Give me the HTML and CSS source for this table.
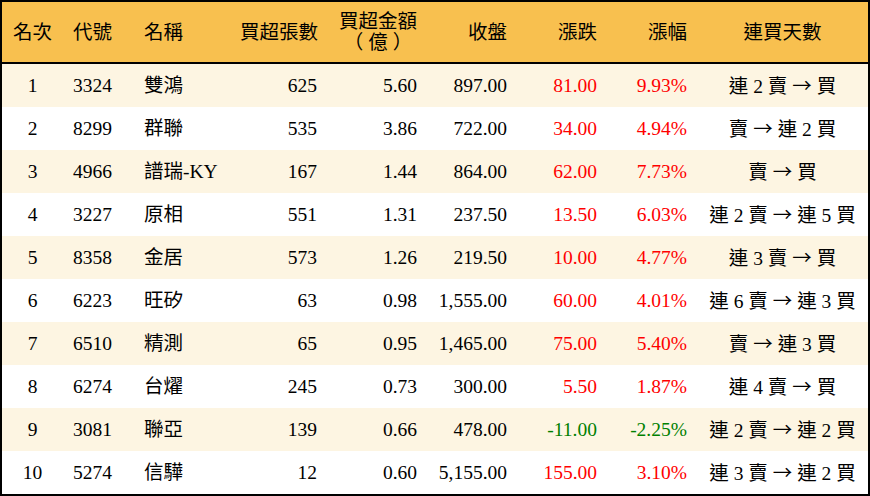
FILE: index.html
```html
<!DOCTYPE html>
<html lang="zh-Hant">
<head>
<meta charset="utf-8">
<title>買超排行</title>
<link rel="stylesheet" href="styles.css">
</head>
<body>
<table class="rank">
  <colgroup>
    <col class="c-rank"><col class="c-code"><col class="c-name"><col class="c-vol"><col class="c-amt"><col class="c-close"><col class="c-chg"><col class="c-pct"><col class="c-days">
  </colgroup>
  <thead>
    <tr>
      <th class="ctr">名次</th>
      <th class="lft">代號</th>
      <th class="lft">名稱</th>
      <th class="rgt">買超張數</th>
      <th class="rgt"><span class="stack">買超金額<br><span class="unit">（億）</span></span></th>
      <th class="rgt">收盤</th>
      <th class="rgt">漲跌</th>
      <th class="rgt">漲幅</th>
      <th class="ctr">連買天數</th>
    </tr>
  </thead>
  <tbody>
    <tr><td class="ctr">1</td><td class="lft">3324</td><td class="lft">雙鴻</td><td class="rgt">625</td><td class="rgt">5.60</td><td class="rgt">897.00</td><td class="rgt up">81.00</td><td class="rgt up">9.93%</td><td class="ctr">連 2 賣 <span class="arr">→</span> 買</td></tr>
    <tr><td class="ctr">2</td><td class="lft">8299</td><td class="lft">群聯</td><td class="rgt">535</td><td class="rgt">3.86</td><td class="rgt">722.00</td><td class="rgt up">34.00</td><td class="rgt up">4.94%</td><td class="ctr">賣 <span class="arr">→</span> 連 2 買</td></tr>
    <tr><td class="ctr">3</td><td class="lft">4966</td><td class="lft">譜瑞-KY</td><td class="rgt">167</td><td class="rgt">1.44</td><td class="rgt">864.00</td><td class="rgt up">62.00</td><td class="rgt up">7.73%</td><td class="ctr">賣 <span class="arr">→</span> 買</td></tr>
    <tr><td class="ctr">4</td><td class="lft">3227</td><td class="lft">原相</td><td class="rgt">551</td><td class="rgt">1.31</td><td class="rgt">237.50</td><td class="rgt up">13.50</td><td class="rgt up">6.03%</td><td class="ctr">連 2 賣 <span class="arr">→</span> 連 5 買</td></tr>
    <tr><td class="ctr">5</td><td class="lft">8358</td><td class="lft">金居</td><td class="rgt">573</td><td class="rgt">1.26</td><td class="rgt">219.50</td><td class="rgt up">10.00</td><td class="rgt up">4.77%</td><td class="ctr">連 3 賣 <span class="arr">→</span> 買</td></tr>
    <tr><td class="ctr">6</td><td class="lft">6223</td><td class="lft">旺矽</td><td class="rgt">63</td><td class="rgt">0.98</td><td class="rgt">1,555.00</td><td class="rgt up">60.00</td><td class="rgt up">4.01%</td><td class="ctr">連 6 賣 <span class="arr">→</span> 連 3 買</td></tr>
    <tr><td class="ctr">7</td><td class="lft">6510</td><td class="lft">精測</td><td class="rgt">65</td><td class="rgt">0.95</td><td class="rgt">1,465.00</td><td class="rgt up">75.00</td><td class="rgt up">5.40%</td><td class="ctr">賣 <span class="arr">→</span> 連 3 買</td></tr>
    <tr><td class="ctr">8</td><td class="lft">6274</td><td class="lft">台燿</td><td class="rgt">245</td><td class="rgt">0.73</td><td class="rgt">300.00</td><td class="rgt up">5.50</td><td class="rgt up">1.87%</td><td class="ctr">連 4 賣 <span class="arr">→</span> 買</td></tr>
    <tr><td class="ctr">9</td><td class="lft">3081</td><td class="lft">聯亞</td><td class="rgt">139</td><td class="rgt">0.66</td><td class="rgt">478.00</td><td class="rgt down">-11.00</td><td class="rgt down">-2.25%</td><td class="ctr">連 2 賣 <span class="arr">→</span> 連 2 買</td></tr>
    <tr><td class="ctr">10</td><td class="lft">5274</td><td class="lft">信驊</td><td class="rgt">12</td><td class="rgt">0.60</td><td class="rgt">5,155.00</td><td class="rgt up">155.00</td><td class="rgt up">3.10%</td><td class="ctr">連 3 賣 <span class="arr">→</span> 連 2 買</td></tr>
  </tbody>
</table>
</body>
</html>
```

FILE: styles.css
```css
html, body {
  margin: 0;
  padding: 0;
  background: #ffffff;
}

.rank {
  width: 870px;
  table-layout: fixed;
  border-collapse: separate;
  border-spacing: 0;
  border: 2px solid #000;
  font-family: "Liberation Serif", "Noto Sans CJK TC", serif;
  font-size: 19.5px;
  color: #000;
}

.c-rank { width: 61px; }
.c-code { width: 71px; }
.c-name { width: 96px; }
.c-vol { width: 97px; }
.c-amt { width: 100px; }
.c-close { width: 90px; }
.c-chg { width: 90px; }
.c-pct { width: 90px; }
.c-days { width: 171px; }

.rank th {
  background: #f8c04f;
  height: 60px;
  padding: 0 10px;
  border-bottom: 2px solid #000;
  font-weight: normal;
  line-height: 21px;
  vertical-align: middle;
  white-space: nowrap;
}

.rank td {
  height: 43px;
  padding: 0 10px;
  line-height: 22px;
  vertical-align: middle;
  white-space: nowrap;
}

.rank tbody tr:nth-child(odd) td {
  background: #fdf5e2;
}

.ctr { text-align: center; }
.lft { text-align: left; }
.rgt { text-align: right; }

.rank th.ctr:first-child,
.rank td.ctr:first-child {
  padding: 0;
}

.stack {
  display: inline-block;
  text-align: center;
}

.unit {
  letter-spacing: 5px;
  margin-right: -5px;
}

.arr {
  font-family: "Noto Sans CJK TC", sans-serif;
}

.up { color: #ff0000; }
.down { color: #008000; }
```
